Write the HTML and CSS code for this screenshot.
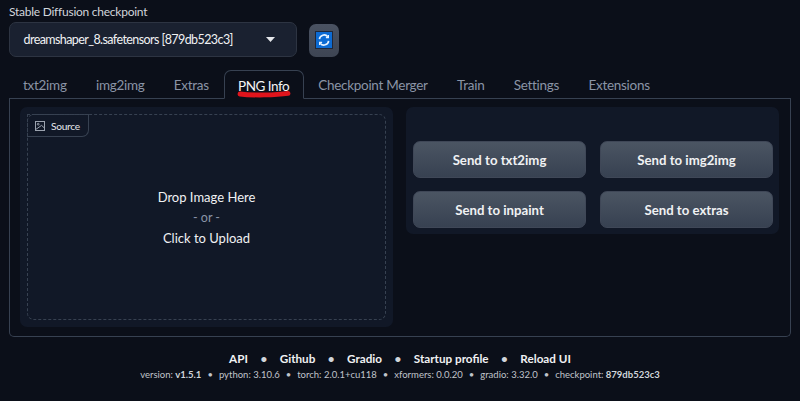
FILE: index.html
```html
<!DOCTYPE html>
<html lang="en">
<head>
<meta charset="utf-8">
<title>Stable Diffusion</title>
<link rel="stylesheet" href="styles.css">
</head>
<body>
<div class="app">
  <div class="label">Stable Diffusion checkpoint</div>
  <div class="checkpoint-row">
    <div class="select">
      <span>dreamshaper_8.safetensors [879db523c3]</span>
      <svg class="caret" width="9" height="5" viewBox="0 0 9 5"><path d="M0 0h9L4.5 5z" fill="#e5e7eb"/></svg>
    </div>
    <div class="refresh">
      <span class="refresh-icon">
        <svg width="14" height="14" viewBox="0 0 14 14" fill="none" stroke="#e8f3ff" stroke-width="1.6"><path d="M2.4 6.2A4.7 4.7 0 0 1 10.8 3.8"/><path d="M11.6 7.8A4.7 4.7 0 0 1 3.2 10.2"/><path d="M11.4 2v2.6H8.9" stroke-width="1.2"/><path d="M2.6 12V9.4h2.5" stroke-width="1.2"/></svg>
      </span>
    </div>
  </div>
  <div class="tabs">
    <span class="tab">txt2img</span>
    <span class="tab">img2img</span>
    <span class="tab">Extras</span>
    <span class="tab active">PNG Info<svg class="scribble" width="54" height="8" viewBox="0 0 54 8"><path d="M3 4C15 5.6 39 5.2 51 3.4" stroke="#e0141c" stroke-width="4.8" stroke-linecap="round" fill="none"/></svg></span>
    <span class="tab">Checkpoint Merger</span>
    <span class="tab">Train</span>
    <span class="tab">Settings</span>
    <span class="tab">Extensions</span>
  </div>
  <div class="panel">
    <div class="block upload">
      <div class="drop">
        <div class="source">
          <svg width="10" height="10" viewBox="0 0 10 10" fill="none" stroke="#9ca3af" stroke-width="1"><rect x=".5" y=".5" width="9" height="9"/><circle cx="3.2" cy="3.2" r=".9"/><path d="M.8 8.4 6.6 4.4 9.4 7"/></svg>
          <span>Source</span>
        </div>
        <div class="drop-text">
          <div>Drop Image Here</div>
          <div class="or">- or -</div>
          <div>Click to Upload</div>
        </div>
      </div>
    </div>
    <div class="block actions">
      <button class="btn">Send to txt2img</button>
      <button class="btn">Send to img2img</button>
      <button class="btn">Send to inpaint</button>
      <button class="btn">Send to extras</button>
    </div>
  </div>
  <div class="footer">
    <div class="links">
      <span>API</span><i>•</i><span>Github</span><i>•</i><span>Gradio</span><i>•</i><span>Startup profile</span><i>•</i><span>Reload UI</span>
    </div>
    <div class="versions">
      <span>version: <b>v1.5.1</b></span><i>•</i><span>python: 3.10.6</span><i>•</i><span>torch: 2.0.1+cu118</span><i>•</i><span>xformers: 0.0.20</span><i>•</i><span>gradio: 3.32.0</span><i>•</i><span>checkpoint: <b>879db523c3</b></span>
    </div>
  </div>
</div>
</body>
</html>
```
FILE: styles.css
```css
* { box-sizing: border-box; }
html, body { margin: 0; height: 100%; background: #0b0f19; overflow: hidden; }
body { font-family: "Lato", "Open Sans", sans-serif; color: #e5e7eb; }
.app { padding: 4px 9px 0; }
.label { font-size: 12px; letter-spacing: -0.25px; line-height: 15px; color: #d1d5db; height: 18px; }
.checkpoint-row { display: flex; align-items: center; gap: 12px; }
.select { width: 288px; height: 35px; padding: 0 21px 0 13.5px; display: flex; align-items: center; justify-content: space-between; background: #1a2130; border: 1px solid #2d3442; border-radius: 7px; font-size: 12.5px; letter-spacing: -0.58px; color: #f0f1f3; }
.refresh { width: 30px; height: 33px; margin-top: 1px; display: flex; align-items: center; justify-content: center; background: linear-gradient(#4a5262, #3e4553); border-radius: 7px; }
.refresh-icon { width: 16px; height: 16px; display: flex; align-items: center; justify-content: center; background: #0d6bd3; outline: 1px solid #20283a; }
.tabs { display: flex; height: 29px; margin-top: 13px; border-bottom: 1px solid #374151; font-size: 13.5px; letter-spacing: -0.28px; color: #8a94a6; }
.tab { display: flex; align-items: center; padding: 2px 14.7px 0 14.6px; white-space: nowrap; }
.tab:first-child { padding-left: 14px; }
.tab.active { position: relative; height: 29px; background: #0b0f19; border: 1px solid #374151; border-bottom-color: #0b0f19; border-radius: 7px 7px 0 0; color: #f3f4f6; padding: 2px 13.5px 0; letter-spacing: -0.5px; }
.scribble { position: absolute; left: 12px; bottom: 0; }
.panel { display: flex; align-items: flex-start; gap: 13px; height: 238px; padding: 8px 11px 8px 10px; border: 1px solid #374151; border-top: 0; border-radius: 0 0 5px 5px; }
.block { width: 373px; background: #111827; border-radius: 7px; }
.upload { height: 220px; padding: 7px; }
.drop { position: relative; height: 206px; border: 1px dashed #374151; border-radius: 7px; display: flex; align-items: center; justify-content: center; }
.source { position: absolute; left: -1px; top: -1px; height: 23px; display: flex; align-items: center; gap: 6px; padding: 0 8px 0 7px; border: 1px solid #374151; border-radius: 0 0 7px 0; border-top-style: dashed; border-left-style: dashed; font-size: 10.2px; letter-spacing: -0.3px; color: #e5e7eb; }
.drop-text { text-align: center; font-size: 13px; line-height: 20.5px; color: #f0f1f3; margin-top: 2px; }
.or { color: #8a94a6; font-size: 12.5px; }
.actions { height: 127px; padding: 34px 7px 6px; display: grid; grid-template-columns: 173px 173px; grid-auto-rows: 37px; column-gap: 14px; row-gap: 13px; }
.btn { font: 700 13.2px "Lato", sans-serif; color: #f0f1f3; background: linear-gradient(#4b5563, #374151); border: 1px solid #3f4757; border-radius: 7px; padding: 0; }
.footer { text-align: center; margin-top: 14px; }
.links { display: flex; justify-content: center; gap: 12.5px; font-size: 11.7px; font-weight: 700; line-height: 15px; color: #f0f1f3; padding-bottom: 2px; }
.links i { font-style: normal; color: #d1d5db; }
.versions { display: flex; justify-content: center; gap: 6px; font-size: 9.5px; line-height: 14px; color: #c0c4cb; }
.versions i { font-style: normal; }
.versions b { color: #d1d5db; }
```
